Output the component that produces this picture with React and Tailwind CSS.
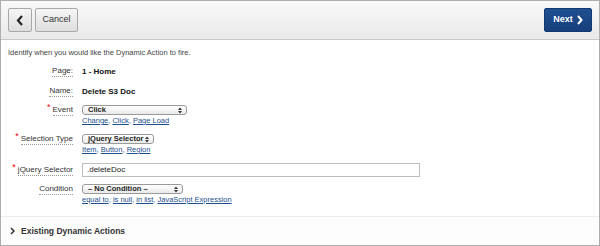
import React from "react";

const font = { fontFamily: '"Liberation Sans", Arial, sans-serif' };

const Label = ({ children, required }) => (
  <div className="w-[65px] shrink-0 flex justify-end items-start relative">
    {required && (
      <span className="text-[#e00] text-[9px] leading-none mr-[2px] -mt-[2px]">*</span>
    )}
    <span className="text-[8px] text-[#333] leading-[10px] border-b border-dotted border-[#999] whitespace-nowrap">
      {children}
    </span>
  </div>
);

const Select = ({ value, width }) => (
  <div
    className="h-[10px] rounded-[3px] border border-[#9a9a9a] bg-gradient-to-b from-white to-[#e9e9e9] flex items-center justify-between pl-[5px] pr-[4px]"
    style={{ width }}
  >
    <span className="text-[7.5px] font-bold text-[#222] leading-none">{value}</span>
    <svg width="4" height="7" viewBox="0 0 4 7">
      <path d="M0 3 L2 0.5 L4 3 Z M0 4 L2 6.5 L4 4 Z" fill="#333" />
    </svg>
  </div>
);

const Links = ({ items }) => (
  <div className="text-[7.5px] leading-[10px] text-[#1c4f8c]">
    {items.map((t, i) => (
      <span key={t}>
        <span className="underline">{t}</span>
        {i < items.length - 1 ? ", " : ""}
      </span>
    ))}
  </div>
);

export default function App() {
  return (
    <div
      className="w-[600px] h-[246px] border border-[#adadad] bg-white flex flex-col overflow-hidden"
      style={font}
    >
      {/* toolbar */}
      <div className="h-[39px] shrink-0 border-b border-[#c8c8c8] bg-gradient-to-b from-[#f9f9f9] to-[#e9e9e9] flex items-center px-[7px]">
        <button className="w-[24px] h-[24px] rounded-[2px] border border-[#a9a9a9] bg-gradient-to-b from-[#f6f6f6] to-[#dedede] flex items-center justify-center">
          <svg width="8" height="11" viewBox="0 0 8 11">
            <path d="M6 1 L2 5.5 L6 10" stroke="#222" strokeWidth="2.2" fill="none" />
          </svg>
        </button>
        <button className="ml-[3px] w-[43px] h-[24px] rounded-[2px] border border-[#a9a9a9] bg-gradient-to-b from-[#f6f6f6] to-[#dedede] text-[9px] text-[#333]">
          Cancel
        </button>
        <div className="flex-1" />
        <button className="w-[48px] h-[24px] rounded-[2px] border border-[#123a70] bg-gradient-to-b from-[#1f4f91] to-[#163f7b] flex items-center justify-center gap-[4px]">
          <span className="text-[9px] font-bold text-white">Next</span>
          <svg width="6" height="10" viewBox="0 0 6 10">
            <path d="M1 1 L4.5 5 L1 9" stroke="#fff" strokeWidth="2" fill="none" />
          </svg>
        </button>
      </div>

      {/* form */}
      <div className="flex-1 flex flex-col px-[7px]">
        <div className="mt-[8px] text-[7.5px] text-[#444] leading-[10px]">
          Identify when you would like the Dynamic Action to fire.
        </div>

        <div className="mt-[8px] flex gap-[9px] items-center">
          <Label>Page:</Label>
          <span className="text-[8px] font-bold text-[#111] leading-[10px]">1 - Home</span>
        </div>

        <div className="mt-[9px] flex gap-[9px] items-center">
          <Label>Name:</Label>
          <span className="text-[8px] font-bold text-[#111] leading-[10px]">Delete S3 Doc</span>
        </div>

        <div className="mt-[8px] flex gap-[9px]">
          <Label required>Event</Label>
          <div className="flex flex-col gap-[1px]">
            <Select value="Click" width={105} />
            <Links items={["Change", "Click", "Page Load"]} />
          </div>
        </div>

        <div className="mt-[8px] flex gap-[9px]">
          <Label required>Selection Type</Label>
          <div className="flex flex-col gap-[1px]">
            <Select value="jQuery Selector" width={72} />
            <Links items={["Item", "Button", "Region"]} />
          </div>
        </div>

        <div className="mt-[8px] flex gap-[9px] items-center">
          <Label required>jQuery Selector</Label>
          <div className="w-[338px] h-[14px] border border-[#bdbdbd] flex items-center px-[4px] text-[8px] text-[#222]">
            .deleteDoc
          </div>
        </div>

        <div className="mt-[7px] flex gap-[9px]">
          <Label>Condition</Label>
          <div className="flex flex-col gap-[1px]">
            <Select value="– No Condition –" width={101} />
            <Links items={["equal to", "is null", "in list", "JavaScript Expression"]} />
          </div>
        </div>
      </div>

      {/* existing actions */}
      <div className="h-[29px] shrink-0 border-t border-[#ececec] flex items-center px-[9px] gap-[6px] bg-[#fdfdfd]">
        <svg width="5" height="8" viewBox="0 0 5 8">
          <path d="M1 1 L4 4 L1 7" stroke="#333" strokeWidth="1.5" fill="none" />
        </svg>
        <span className="text-[8.5px] font-bold text-[#333]">Existing Dynamic Actions</span>
      </div>
    </div>
  );
}
